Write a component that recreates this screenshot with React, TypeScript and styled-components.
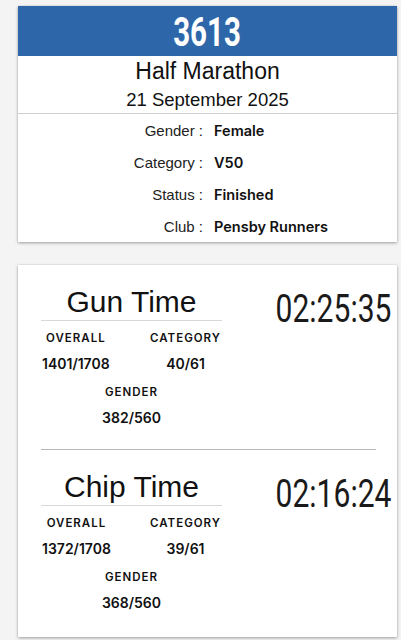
import React from "react";
import styled, { createGlobalStyle } from "styled-components";

const GlobalStyle = createGlobalStyle`
  html, body {
    margin: 0;
    padding: 0;
    background: #f4f4f4;
  }
  body {
    font-family: "Liberation Sans", Arial, sans-serif;
    color: #111;
  }
`;

const Page = styled.div`
  width: 401px;
  min-height: 640px;
  box-sizing: border-box;
  padding: 6px 4px 0 18px;
  display: flex;
  flex-direction: column;
  gap: 23px;
`;

const Card = styled.div`
  background: #fff;
  box-shadow: 0 1px 3px rgba(0, 0, 0, 0.35), 0 0 1px rgba(0, 0, 0, 0.12);
  width: 379px;
`;

const Header = styled.div`
  height: 50px;
  box-sizing: border-box;
  padding-top: 2px;
  background: #2d67aa;
  display: flex;
  align-items: center;
  justify-content: center;
`;

const Bib = styled.div`
  font-family: "Roboto", "Liberation Sans", sans-serif;
  font-weight: 700;
  font-size: 41px;
  line-height: 48px;
  color: #fff;
  transform: scaleX(0.72);
`;

const TitleBlock = styled.div`
  padding-top: 1px;
  text-align: center;
  border-bottom: 1px solid #cfcfcf;
`;

const RaceName = styled.div`
  font-size: 23px;
  line-height: 29px;
  color: #111;
`;

const RaceDate = styled.div`
  font-size: 18.5px;
  line-height: 27px;
  color: #111;
`;

const InfoGrid = styled.div`
  display: grid;
  grid-template-columns: 185px 1fr;
  column-gap: 11px;
  grid-auto-rows: 32px;
  align-items: center;
`;

const InfoLabel = styled.div`
  text-align: right;
  font-size: 15px;
  color: #222;
`;

const InfoValue = styled.div`
  font-family: "Inter", "Liberation Sans", sans-serif;
  font-weight: 600;
  font-size: 14.5px;
  color: #111;
`;

const ResultSection = styled.div`
  display: flex;
  padding: 20px 6px 0 23px;
`;

const LeftCol = styled.div`
  width: 181px;
  flex: none;
`;

const SectionTitle = styled.div`
  font-size: 30px;
  line-height: 34px;
  text-align: center;
  padding-bottom: 1px;
  border-bottom: 1px solid #d8d8d8;
  color: #111;
`;

const Stats = styled.div`
  display: flex;
  flex-wrap: wrap;
  justify-content: space-between;
  row-gap: 10px;
  padding: 8px 1px 0 1px;
`;

const Stat = styled.div<{ $full?: boolean }>`
  display: flex;
  flex-direction: column;
  align-items: center;
  gap: 8px;
  ${(p) => (p.$full ? "width: 100%;" : "")}
`;

const StatLabel = styled.div`
  font-family: "Inter", "Liberation Sans", sans-serif;
  font-weight: 600;
  font-size: 11.5px;
  letter-spacing: 1px;
  line-height: 18px;
  color: #111;
`;

const StatValue = styled.div`
  font-family: "Inter", "Liberation Sans", sans-serif;
  font-weight: 600;
  font-size: 14px;
  line-height: 18px;
  color: #111;
`;

const TimeCol = styled.div`
  flex: 1;
  display: flex;
  justify-content: flex-end;
`;

const Time = styled.div`
  font-family: "Roboto", "Liberation Sans", sans-serif;
  font-weight: 400;
  font-size: 39px;
  line-height: 48px;
  color: #1a1a1a;
  white-space: nowrap;
  transform: scaleX(0.77);
  transform-origin: right center;
`;

const Divider = styled.div`
  height: 1px;
  background: #b8b8b8;
  margin: 22px 21px 0 23px;
`;

const BottomSpace = styled.div`
  height: 25px;
`;

type Result = {
  title: string;
  time: string;
  overall: string;
  category: string;
  gender: string;
};

const results: Result[] = [
  { title: "Gun Time", time: "02:25:35", overall: "1401/1708", category: "40/61", gender: "382/560" },
  { title: "Chip Time", time: "02:16:24", overall: "1372/1708", category: "39/61", gender: "368/560" },
];

const info: [string, string][] = [
  ["Gender :", "Female"],
  ["Category :", "V50"],
  ["Status :", "Finished"],
  ["Club :", "Pensby Runners"],
];

function ResultBlock({ r }: { r: Result }) {
  return (
    <ResultSection>
      <LeftCol>
        <SectionTitle>{r.title}</SectionTitle>
        <Stats>
          <Stat>
            <StatLabel>OVERALL</StatLabel>
            <StatValue>{r.overall}</StatValue>
          </Stat>
          <Stat>
            <StatLabel>CATEGORY</StatLabel>
            <StatValue>{r.category}</StatValue>
          </Stat>
          <Stat $full>
            <StatLabel>GENDER</StatLabel>
            <StatValue>{r.gender}</StatValue>
          </Stat>
        </Stats>
      </LeftCol>
      <TimeCol>
        <Time>{r.time}</Time>
      </TimeCol>
    </ResultSection>
  );
}

export default function App() {
  return (
    <>
      <GlobalStyle />
      <Page>
        <Card>
          <Header>
            <Bib>3613</Bib>
          </Header>
          <TitleBlock>
            <RaceName>Half Marathon</RaceName>
            <RaceDate>21 September 2025</RaceDate>
          </TitleBlock>
          <InfoGrid>
            {info.map(([k, v]) => (
              <React.Fragment key={k}>
                <InfoLabel>{k}</InfoLabel>
                <InfoValue>{v}</InfoValue>
              </React.Fragment>
            ))}
          </InfoGrid>
        </Card>
        <Card>
          <ResultBlock r={results[0]} />
          <Divider />
          <ResultBlock r={results[1]} />
          <BottomSpace />
        </Card>
      </Page>
    </>
  );
}
